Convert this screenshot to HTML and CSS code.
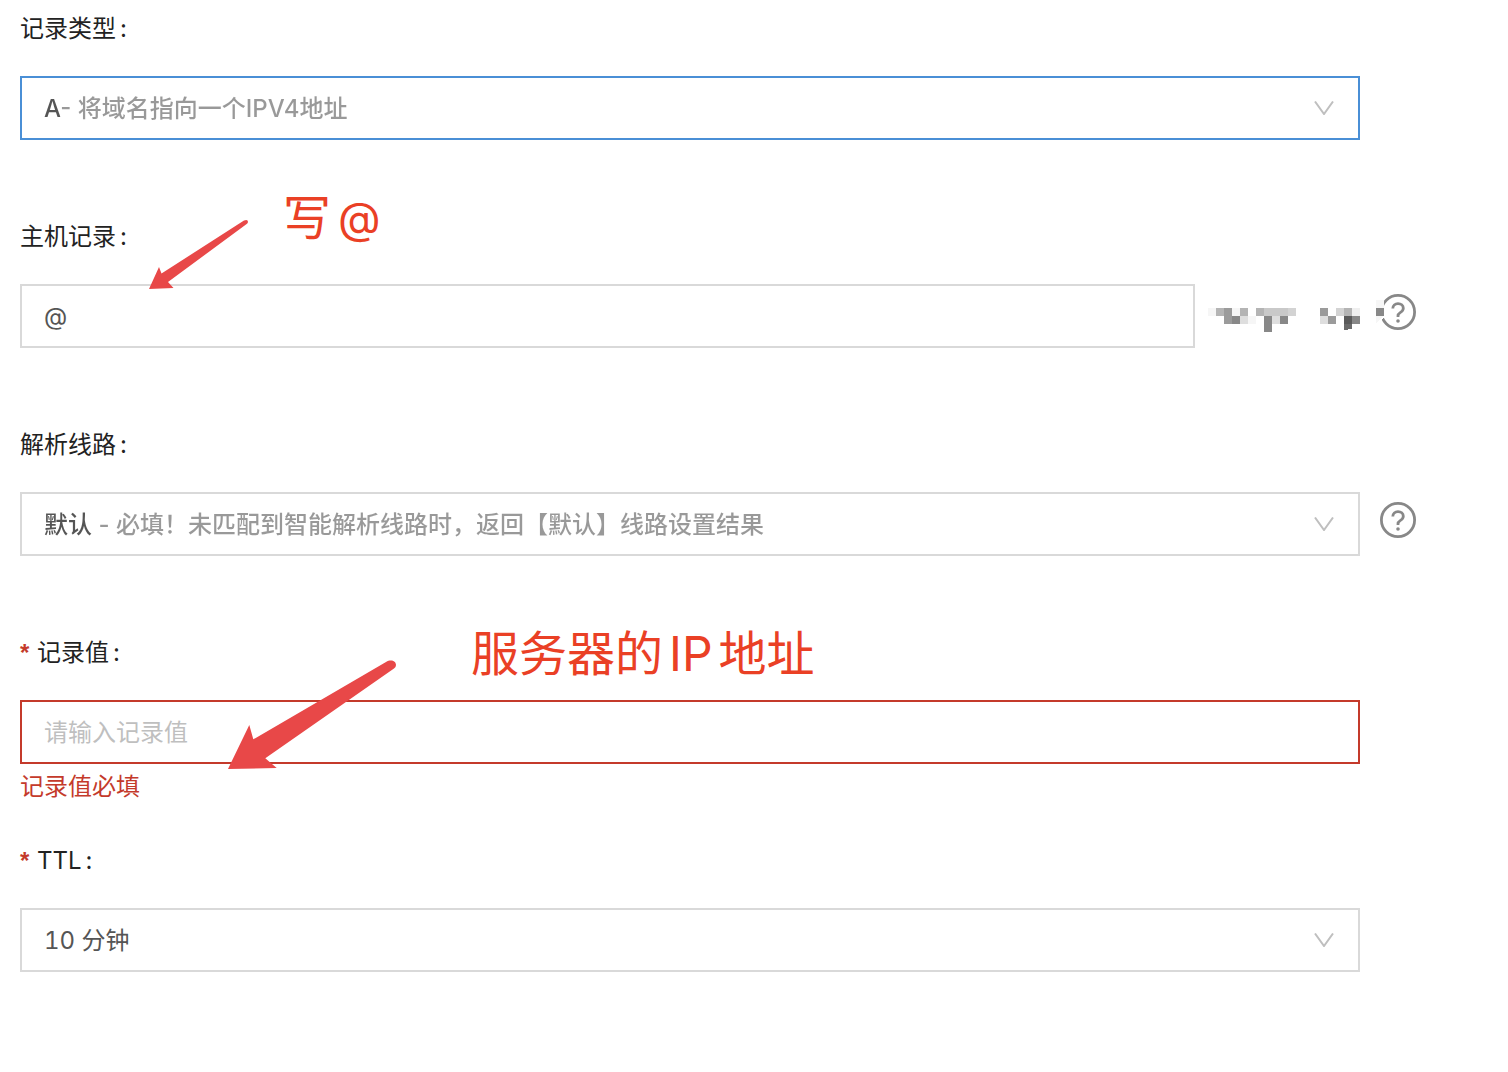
FILE: index.html
```
<!DOCTYPE html>
<html lang="zh-CN">
<head>
    <meta charset="UTF-8">
    <meta name="viewport" content="width=device-width, initial-scale=1">
    <title>添加记录</title>
    <link rel="stylesheet" href="styles.css">
</head>
<body>
    <form class="record-form">
        <div class="field">
            <label class="label" for="type">记录类型<span class="colon">:</span></label>
            <div class="row">
                <div class="control">
                    <select class="box box-type active" id="type">
                        <option>A- 将域名指向一个IPV4地址</option>
                    </select>
                    <svg class="chevron" viewBox="0 0 20 14" aria-hidden="true"><path d="M1 0.5 L10 13 L19 0.5"/></svg>
                </div>
            </div>
        </div>

        <div class="field">
            <label class="label" for="host">主机记录<span class="colon">:</span></label>
            <div class="row">
                <div class="control">
                    <input class="box" id="host" type="text" value="@">
                    <!-- 打码的域名 -->
                    <svg class="domain" viewBox="0 0 176 32" shape-rendering="crispEdges" aria-hidden="true">
                        <path fill="#fff" d="M168 0h9v16l-5 6h-4z"/>
                        <path fill="#f6f6f6" d="M0 8h8v8H0zM24 8h8v8h-8zM40 16h8v8h-8zM168 0h8v8h-8zM168 16h7l-7 8z"/>
                        <path fill="#b4b4b4" d="M8 8h8v8H8zM32 8h8v8h-8zM48 8h8v8h-8zM136 8h8v8h-8z"/>
                        <path fill="#9b9b9b" d="M16 8h8v16h-8zM112 8h8v8h-8zM120 16h8v8h-8z"/>
                        <path fill="#c9c9c9" d="M56 8h24v8H56z"/>
                        <path fill="#d3d3d3" d="M80 8h8v8h-8zM128 8h8v8h-8z"/>
                        <path fill="#dedede" d="M32 16h8v8h-8zM64 16h8v8h-8zM112 16h8v8h-8z"/>
                        <path fill="#efefef" d="M144 8h8v8h-8z"/>
                        <path fill="#888" d="M24 16h8v8h-8zM56 16h8v16h-8zM72 16h8v8h-8zM144 16h8v8h-8zM168 8h8v8h-8z"/>
                        <path fill="#5a5a5a" d="M136 16h8v8h-8z"/>
                        <path fill="#6a6a6a" d="M136 24h8v5l-8 1z"/>
                    </svg>
                </div>
                <button class="help" type="button" aria-label="帮助">
                    <svg viewBox="0 0 36 36"><circle cx="18" cy="18" r="16.6"/><path d="M12.8 14.6c0-3.1 2.3-5 5.2-5s5.3 1.9 5.3 4.7c0 2.3-1.5 3.4-3.1 4.3-1.5.9-2.2 1.6-2.2 3.4v1"/><circle class="dot" cx="18" cy="27" r="1.8"/></svg>
                </button>
            </div>
            <svg class="arrow arrow-host" viewBox="0 0 102 72" aria-hidden="true"><path d="M1 71 L11 49 L13.5 55.5 L96 2.5 Q100 1 100 4 Q100 5 98 6.5 L20 64 L25.5 70 Z"/></svg>
            <span class="note note-host">写<span class="at">@</span></span>
        </div>

        <div class="field">
            <label class="label" for="line">解析线路<span class="colon">:</span></label>
            <div class="row">
                <div class="control">
                    <select class="box box-line" id="line">
                        <option>默认 - 必填！未匹配到智能解析线路时，返回【默认】线路设置结果</option>
                    </select>
                    <svg class="chevron" viewBox="0 0 20 14" aria-hidden="true"><path d="M1 0.5 L10 13 L19 0.5"/></svg>
                </div>
                <button class="help" type="button" aria-label="帮助">
                    <svg viewBox="0 0 36 36"><circle cx="18" cy="18" r="16.6"/><path d="M12.8 14.6c0-3.1 2.3-5 5.2-5s5.3 1.9 5.3 4.7c0 2.3-1.5 3.4-3.1 4.3-1.5.9-2.2 1.6-2.2 3.4v1"/><circle class="dot" cx="18" cy="27" r="1.8"/></svg>
                </button>
            </div>
        </div>

        <div class="field">
            <label class="label" for="value"><span class="required">*</span>记录值<span class="colon">:</span></label>
            <div class="row">
                <div class="control">
                    <input class="box invalid" id="value" type="text" placeholder="请输入记录值" aria-describedby="value-error">
                </div>
            </div>
            <div class="error" id="value-error">记录值必填</div>
            <svg class="arrow arrow-value" viewBox="0 0 170 110" aria-hidden="true"><path d="M0 109 L21.3 65 L25.3 79.3 L158 2 C163 -1 168 1 168 5 Q168 7 166 8.5 L37.3 98.3 L48.7 108 Z"/></svg>
            <span class="note note-value">服务器的<span class="latin">IP</span>地址</span>
        </div>

        <div class="field">
            <label class="label" for="ttl"><span class="required">*</span>TTL<span class="colon">:</span></label>
            <div class="row">
                <div class="control">
                    <select class="box box-ttl" id="ttl">
                        <option>10 分钟</option>
                    </select>
                    <svg class="chevron" viewBox="0 0 20 14" aria-hidden="true"><path d="M1 0.5 L10 13 L19 0.5"/></svg>
                </div>
            </div>
        </div>
    </form>
</body>
</html>
```
FILE: styles.css
```
* {
    box-sizing: border-box;
}

body {
    margin: 0;
    background: #fff;
    color: #222;
    font-family: Inter, "Noto Sans CJK SC", sans-serif;
    font-size: 24px;
}

.record-form {
    padding: 4px 20px 0;
}

.field {
    position: relative;
    min-height: 208px;
}

.label {
    display: block;
    margin-bottom: 22px;
    line-height: 50px;
}

.colon {
    margin-left: 4px;
}

.required {
    display: inline-block;
    width: 17px;
    color: #c43a2b;
    font-family: "Liberation Sans", sans-serif;
    font-weight: bold;
}

.row {
    display: flex;
    align-items: flex-start;
    padding-right: 128px;
}

.control {
    display: flex;
    flex: 1;
    align-items: center;
    position: relative;
}

.box {
    flex: 1;
    min-width: 0;
    height: 64px;
    padding: 0 22px;
    border: 2px solid #d9d9d9;
    border-radius: 0;
    background: #fff;
    color: #555;
    font: inherit;
    outline: none;
    appearance: none;
}

    .box::placeholder {
        color: #bfbfbf;
        opacity: 1;
    }

    .box.active {
        border-color: #4a8fd6;
    }

    .box.invalid {
        border-color: #c43a2b;
    }

/* dark value, grey description */
.box-type,
.box-line {
    background: linear-gradient(to right, #555 38px, #999 38px);
    background-clip: text;
    color: transparent;
    font-weight: 500;
}

.box-line {
    background-image: linear-gradient(to right, #555 72px, #999 72px);
}

    .box-type option,
    .box-line option {
        color: #555;
    }

.box-ttl {
    font-variant-numeric: tabular-nums;
}

.chevron {
    position: absolute;
    right: 26px;
    width: 20px;
    height: 14px;
    fill: none;
    stroke: #bfbfbf;
    stroke-width: 2;
    pointer-events: none;
}

.domain {
    position: relative;
    z-index: 1;
    width: 176px;
    height: 32px;
    margin: 0 -24px 0 13px;
}

.help {
    width: 36px;
    height: 36px;
    margin: 10px -56px 0 20px;
    padding: 0;
    border: none;
    background: none;
    cursor: pointer;
}

    .help svg {
        display: block;
        fill: none;
        stroke: #888;
        stroke-width: 2.8;
    }

    .help .dot {
        fill: #888;
        stroke: none;
    }

.error {
    color: #c43a2b;
    line-height: 46px;
}

.arrow {
    position: absolute;
    fill: #e84848;
    pointer-events: none;
}

.arrow-host {
    top: 6px;
    left: 128px;
    width: 102px;
    height: 72px;
}

.arrow-value {
    top: 32px;
    left: 208px;
    width: 170px;
    height: 110px;
}

.note {
    display: flex;
    align-items: center;
    position: absolute;
    color: #ea4025;
    font-size: 48px;
    line-height: 64px;
    white-space: nowrap;
    pointer-events: none;
}

.note-host {
    top: -26px;
    left: 263px;
}

.note-value {
    top: -6px;
    left: 451px;
}

.at {
    margin-left: 7px;
    font-size: 44px;
}

.latin {
    margin: 0 6px;
}
```
